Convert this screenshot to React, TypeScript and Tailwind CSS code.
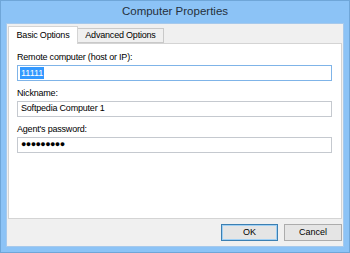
import React from 'react';

const font = { fontFamily: '"Liberation Sans", Arial, sans-serif' };

function Field({ label, children }: { label: string; children: React.ReactNode }) {
    return (
        <div className="flex flex-col">
            <label className="h-[15px] leading-[15px] text-[9px] tracking-[-0.2px] text-black">{label}</label>
            {children}
        </div>
    );
}

export default function App() {
    return (
        <div
            className="w-[350px] h-[253px] bg-[#8cc3f6] border border-[#6fa6d8] flex flex-col overflow-hidden"
            style={font}
        >
            {/* title bar */}
            <div className="h-[22px] shrink-0 flex items-center justify-center text-[11.5px] text-[#26303b] leading-none">
                Computer Properties
            </div>

            {/* client area */}
            <div className="mx-[5px] mb-[5px] flex-1 bg-[#f0f0f0] border border-[#a6c9ec] flex flex-col px-px pt-[2px]">
                {/* tabs */}
                <div className="flex items-end h-[18px] relative z-10 shrink-0">
                    <div className="h-[18px] w-[70px] bg-white border border-b-0 border-[#d4d4d4] flex items-center justify-center text-[9px] tracking-[-0.2px] text-black whitespace-nowrap">
                        Basic Options
                    </div>
                    <div className="h-[15px] w-[86px] mb-px bg-[#f0f0f0] border border-l-0 border-[#c9c9c9] flex items-center justify-center text-[9px] tracking-[-0.2px] text-black whitespace-nowrap">
                        Advanced Options
                    </div>
                </div>

                {/* panel */}
                <div className="h-[176px] shrink-0 -mt-px bg-white border border-[#d4d4d4] pl-[8px] pr-[9px] pt-[6px] flex flex-col gap-[5px]">
                    <Field label="Remote computer (host or IP):">
                        <div className="h-[16px] border border-[#7fb4e8] flex items-center px-[2px]">
                            <span className="bg-[#3399ff] text-white text-[9px] leading-[12px] px-px">11111</span>
                        </div>
                    </Field>
                    <Field label="Nickname:">
                        <div className="h-[16px] border border-[#c5c9cf] flex items-center px-[3px] text-[9px] tracking-[-0.2px] text-black">
                            Softpedia Computer 1
                        </div>
                    </Field>
                    <Field label="Agent's password:">
                        <div className="h-[16px] border border-[#c5c9cf] flex items-center px-[3px] text-[9px] text-black tracking-[-0.6px]">
                            ●●●●●●●●●
                        </div>
                    </Field>
                </div>

                {/* buttons */}
                <div className="flex-1 flex items-center justify-end gap-[6px]">
                    <button className="w-[57px] h-[17px] bg-[#e5e5e5] border border-[#3c7fb1] outline outline-1 -outline-offset-2 outline-[#9fd0f5] text-[9px] text-black">
                        OK
                    </button>
                    <button className="w-[58px] h-[17px] bg-[#e5e5e5] border border-[#acacac] text-[9px] text-black">
                        Cancel
                    </button>
                </div>
            </div>
        </div>
    );
}
